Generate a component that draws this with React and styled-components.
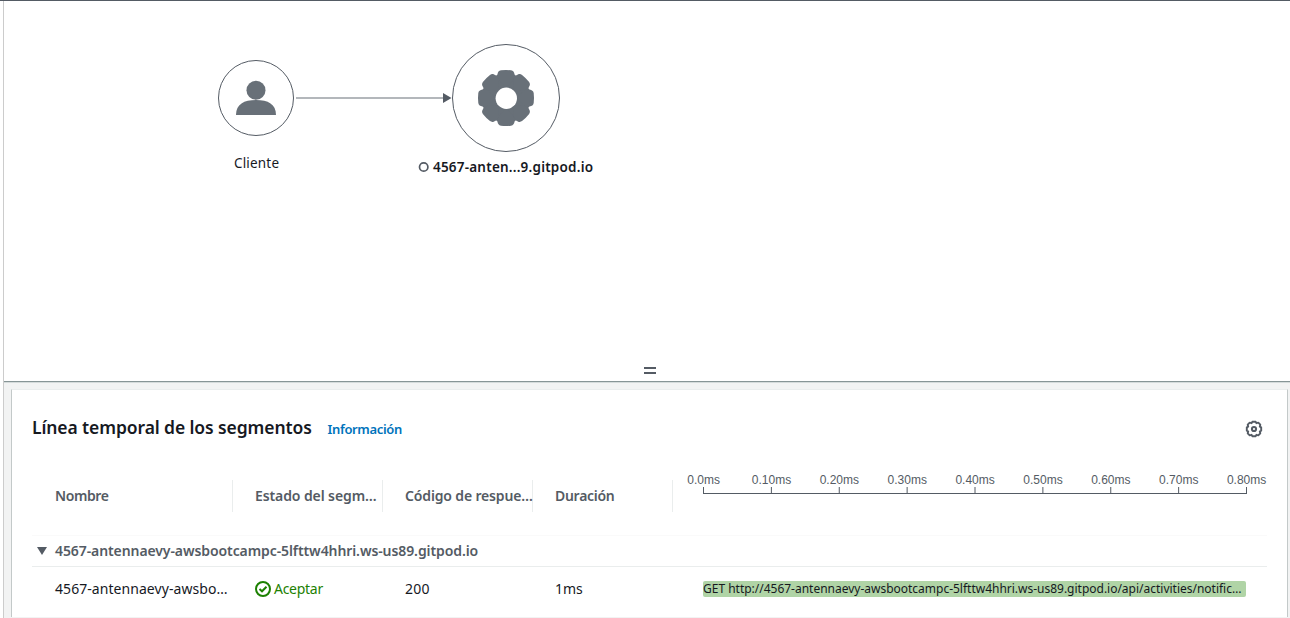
import React from "react";
import styled, { createGlobalStyle } from "styled-components";

const GlobalStyle = createGlobalStyle`
  * { box-sizing: border-box; }
  html, body { margin: 0; height: 618px; overflow: hidden; background: #fff; }
  body { font-family: "Noto Sans", "Open Sans", sans-serif; font-size: 14px; color: #16191f; }
`;

const Page = styled.div`
  height: 618px;
  padding-left: 3px;
  border-top: 1px solid #545b64;
  overflow: hidden;
`;

const Shell = styled.div`
  height: 617px;
  border-left: 1px solid #ccc;
  display: flex;
  flex-direction: column;
`;

const MapPane = styled.section`
  height: 380px;
  flex: none;
  display: flex;
  flex-direction: column;
  justify-content: space-between;
`;

const MapCanvas = styled.svg`
  display: block;
  font-family: "Noto Sans", sans-serif;
  font-size: 13.5px;
  fill: #16191f;
`;

const DragHandle = styled.div`
  width: 12px;
  height: 7px;
  margin: 0 0 7px 640px;
  border-top: 2px solid #545b64;
  border-bottom: 2px solid #545b64;
`;

const DetailPane = styled.section`
  flex: 1;
  background: #f2f3f3;
  border-top: 1px solid #879596;
  box-shadow: inset 0 1px #d5dbdb;
  padding: 7px 2px 1px 7px;
`;

const Card = styled.div`
  height: 228px;
  background: #fff;
  border: 1px solid #c3c9c9;
  border-top-color: #eaeded;
  border-bottom: 0;
  padding: 0 20px;
`;

const CardHeader = styled.header`
  height: 78px;
  display: flex;
  align-items: center;
  justify-content: space-between;
  padding-right: 4px;
`;

const Heading = styled.div`
  display: flex;
  align-items: baseline;
  gap: 16px;
  padding-bottom: 4px;
`;

const Title = styled.h2`
  margin: 0;
  width: 279.5px;
  font-size: 17.5px;
  line-height: 22px;
  font-weight: 600;
  letter-spacing: ${(p) => p.$track}px;
  white-space: nowrap;
`;

const InfoLink = styled.a`
  color: #0073bb;
  font-size: 13px;
  font-weight: 600;
  letter-spacing: ${(p) => p.$track}px;
`;

const Row = styled.div`
  display: grid;
  grid-template-columns: 201px 150px 150px 140px 1fr;
  align-items: ${(p) => p.$align || "center"};
  height: ${(p) => p.$h}px;
`;

const HeadCell = styled.div`
  height: 32px;
  margin-top: 12px;
  padding-left: ${(p) => p.$pad || 22}px;
  border-right: 1px solid #eaeded;
  color: #545b64;
  font-weight: 600;
  line-height: 32px;
  white-space: nowrap;
  letter-spacing: ${(p) => p.$track || 0}px;
`;

const Cell = styled.div`
  display: flex;
  align-items: center;
  gap: 3px;
  height: 20px;
  padding-left: ${(p) => p.$pad || 22}px;
  color: ${(p) => p.$color || "#16191f"};
  line-height: 18px;
  white-space: nowrap;
  letter-spacing: ${(p) => p.$track || 0}px;
`;

const AxisSvg = styled.svg`
  display: block;
  font-family: "Liberation Sans", Arial, sans-serif;
  font-size: 12px;
  fill: #545b64;
`;

const GroupRow = styled.div`
  height: 32px;
  margin-top: 4px;
  display: flex;
  align-items: center;
  gap: 8px;
  padding-left: 5px;
  border-top: 1px solid #fafafa;
  border-bottom: 1px solid #eaeded;
  color: #545b64;
  font-weight: 600;
  letter-spacing: ${(p) => p.$track}px;
`;

const GroupName = styled.span`
  padding-bottom: 2px;
`;

const Caret = styled.span`
  border: 5px solid transparent;
  border-top: 8px solid #545b64;
  border-bottom: 0;
`;

const Bar = styled.div`
  margin-left: 30px;
  width: 543px;
  height: 16px;
  border-radius: 2px;
  background: #b0d4a6;
  font-size: 12px;
  line-height: 16px;
  white-space: nowrap;
  letter-spacing: ${(p) => p.$track}px;
`;

const TOOTH_ANGLES = [0, 45, 90, 135, 180, 225, 270, 315];

function Gear() {
  return (
    <g>
      <circle r="23.500" />
      {TOOTH_ANGLES.map((a) => (
        <path
          key={a}
          transform={`rotate(${a})`}
          d="M-10 -21.500Q-9.300 -22.500 -8.600 -23.500C-8 -26 -7.400 -27.200 -5 -27.700Q0 -28.300 5 -27.700C7.400 -27.200 8 -26 8.600 -23.500Q9.300 -22.500 10 -21.500L0 -10Z"
        />
      ))}
    </g>
  );
}

function ServiceMap() {
  return (
    <MapCanvas width="1286" height="200" viewBox="4 1 1286 200">
      <g fill="#687078">
        <circle cx="256" cy="98" r="37.5" fill="none" stroke="#545b64" />
        <circle cx="256" cy="90.300" r="9.500" />
        <path d="M236 115C236 104 244 100 256 100S276 104 276 115Z" />
        <path d="M296 98H444" stroke="#687078" strokeWidth="1.100" />
        <path d="M443 93L451.500 98L443 103Z" fill="#545b64" />
        <circle cx="506" cy="98" r="53.500" fill="none" stroke="#545b64" />
        <g transform="translate(506 98)"><Gear /></g>
        <circle cx="506.300" cy="98.300" r="10.700" fill="#fff" />
        <circle cx="423.700" cy="167" r="4.200" fill="none" stroke="#545b64" strokeWidth="1.700" />
      </g>
      <text x="234" y="168" textLength="45">Cliente</text>
      <text x="433" y="172" textLength="160" fontWeight="600">4567-anten...9.gitpod.io</text>
    </MapCanvas>
  );
}

function SettingsIcon() {
  return (
    <svg width="18" height="18" viewBox="-9 -9 18 18" fill="none" stroke="#545b64" strokeWidth="2">
      <path
        strokeWidth="1.900"
        strokeLinejoin="round"
        d="M-1.700 -7.200H1.700L2.400 -5.800L4.300 -6.300L6.300 -4.300L5.800 -2.400L7.200 -1.700V1.700L5.800 2.400L6.300 4.300L4.300 6.300L2.400 5.800L1.700 7.200H-1.700L-2.400 5.800L-4.300 6.300L-6.300 4.300L-5.800 2.400L-7.200 1.700V-1.700L-5.800 -2.400L-6.300 -4.300L-4.300 -6.300L-2.400 -5.800Z"
      />
      <circle r="2.100" />
    </svg>
  );
}

function CheckIcon() {
  return (
    <svg width="16" height="16" viewBox="0 0 16 16" fill="none" stroke="#1d8102" strokeWidth="2">
      <circle cx="8" cy="8" r="7" />
      <path d="M4.500 8L7 10.300L11.500 5.700" />
    </svg>
  );
}

const TICKS = ["0.0ms", "0.10ms", "0.20ms", "0.30ms", "0.40ms", "0.50ms", "0.60ms", "0.70ms", "0.80ms"];

function TimeAxis() {
  return (
    <AxisSvg width="594" height="40" viewBox="673 468 594 40">
      <path d="M703 493.500H1247" stroke="#545b64" />
      {TICKS.map((t, i) => (
        <g key={t}>
          <path d={`M${703.5 + i * 67.875} 487V493`} stroke="#545b64" />
          <text x={703.6 + i * 67.875} y="484" textAnchor="middle">{t}</text>
        </g>
      ))}
    </AxisSvg>
  );
}

export default function App() {
  return (
    <Page>
      <GlobalStyle />
      <Shell>
        <MapPane>
          <ServiceMap />
          <DragHandle />
        </MapPane>
        <DetailPane>
          <Card>
            <CardHeader>
              <Heading>
                <Title $track={-0.1}>Línea temporal de los segmentos</Title>
                <InfoLink $track={-0.35}>Información</InfoLink>
              </Heading>
              <SettingsIcon />
            </CardHeader>
            <Row $h={63} $align="start">
              <HeadCell $pad={23} $track={-0.4}>Nombre</HeadCell>
              <HeadCell $track={-0.1}>Estado del segm…</HeadCell>
              <HeadCell $track={-0.15}>Código de respue…</HeadCell>
              <HeadCell $track={-0.28}>Duración</HeadCell>
              <TimeAxis />
            </Row>
            <GroupRow $track={-0.09}>
              <Caret />
              <GroupName>4567-antennaevy-awsbootcampc-5lfttw4hhri.ws-us89.gitpod.io</GroupName>
            </GroupRow>
            <Row $h={44}>
              <Cell $pad={23} $track={0.06}>4567-antennaevy-awsbo…</Cell>
              <Cell $color="#1d8102" $track={-0.28}><CheckIcon />Aceptar</Cell>
              <Cell $track={0.2}>200</Cell>
              <Cell>1ms</Cell>
              <Bar $track={-0.01}>GET http://4567-antennaevy-awsbootcampc-5lfttw4hhri.ws-us89.gitpod.io/api/activities/notific…</Bar>
            </Row>
          </Card>
        </DetailPane>
      </Shell>
    </Page>
  );
}
